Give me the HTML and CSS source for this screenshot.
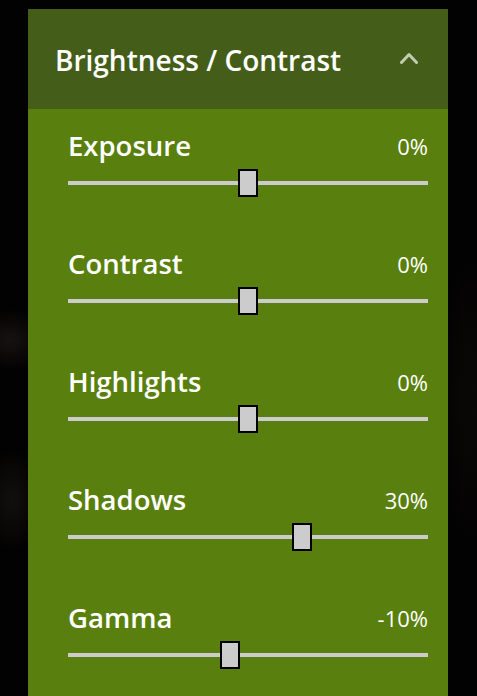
FILE: index.html
```html
<!DOCTYPE html>
<html lang="en">
<head>
<meta charset="utf-8">
<title>Brightness / Contrast</title>
<link rel="stylesheet" href="styles.css">
</head>
<body>
<div class="scene">
  <section class="panel">
    <header class="panel-header">
      <h2 class="panel-title">Brightness / Contrast</h2>
      <svg class="chevron" width="18" height="12" viewBox="0 0 18 12" aria-hidden="true">
        <polyline points="1.5,10.5 9,2.5 16.5,10.5" fill="none" stroke="#c3ccb2" stroke-width="3" stroke-linecap="round" stroke-linejoin="round"/>
      </svg>
    </header>
    <div class="panel-body">
      <div class="row">
        <div class="row-head"><span class="label">Exposure</span><span class="value">0%</span></div>
        <div class="slider"><div class="track"></div><div class="thumb" style="left: 50%"></div></div>
      </div>
      <div class="row">
        <div class="row-head"><span class="label">Contrast</span><span class="value">0%</span></div>
        <div class="slider"><div class="track"></div><div class="thumb" style="left: 50%"></div></div>
      </div>
      <div class="row">
        <div class="row-head"><span class="label">Highlights</span><span class="value">0%</span></div>
        <div class="slider"><div class="track"></div><div class="thumb" style="left: 50%"></div></div>
      </div>
      <div class="row">
        <div class="row-head"><span class="label">Shadows</span><span class="value">30%</span></div>
        <div class="slider"><div class="track"></div><div class="thumb" style="left: 65%"></div></div>
      </div>
      <div class="row">
        <div class="row-head"><span class="label">Gamma</span><span class="value">-10%</span></div>
        <div class="slider"><div class="track"></div><div class="thumb" style="left: 45%"></div></div>
      </div>
    </div>
  </section>
</div>
</body>
</html>
```

FILE: styles.css
```css
html, body {
  margin: 0;
  padding: 0;
  height: 100%;
}

body {
  background-color: #030202;
  background-image:
    radial-gradient(ellipse 40px 30px at 10px 340px, #161210 0%, rgba(22,18,16,0) 100%),
    radial-gradient(ellipse 30px 50px at 12px 500px, #12100d 0%, rgba(18,16,13,0) 100%),
    radial-gradient(ellipse 30px 150px at 470px 400px, #0a0807 0%, rgba(10,8,7,0) 100%);
  font-family: "Open Sans", "Noto Sans", sans-serif;
  color: #ffffff;
  overflow: hidden;
}

.scene {
  padding: 9px 29px 0 28px;
  height: 696px;
  box-sizing: border-box;
  display: flex;
}

.panel {
  width: 420px;
  display: flex;
  flex-direction: column;
  background: #59800e;
}

.panel-header {
  height: 100px;
  flex: none;
  background: #445e19;
  display: flex;
  align-items: center;
  justify-content: space-between;
  padding: 0 30px 0 27px;
  box-sizing: border-box;
}

.panel-title {
  margin: 0;
  font-size: 28px;
  font-weight: 600;
  letter-spacing: 0;
  line-height: 32px;
  padding-top: 2px;
}

.chevron {
  display: block;
  margin-top: -2px;
}

.panel-body {
  padding: 20px 20px 0 40px;
  display: flex;
  flex-direction: column;
}

.row {
  height: 118px;
  display: flex;
  flex-direction: column;
}

.row-head {
  display: flex;
  justify-content: space-between;
  align-items: baseline;
  height: 34px;
}

.label {
  font-size: 27.5px;
  font-weight: 600;
  line-height: 34px;
  letter-spacing: 0;
}

.value {
  font-size: 22px;
  font-weight: 400;
  line-height: 34px;
  position: relative;
  top: -1px;
}

.slider {
  position: relative;
  height: 28px;
  margin-top: 6px;
  display: flex;
  align-items: center;
}

.track {
  flex: 1;
  height: 4px;
  background: #cccccc;
}

.thumb {
  position: absolute;
  top: 0;
  width: 20px;
  height: 28px;
  margin-left: -10px;
  box-sizing: border-box;
  background: #cccccc;
  border: 2px solid #000000;
}
```
